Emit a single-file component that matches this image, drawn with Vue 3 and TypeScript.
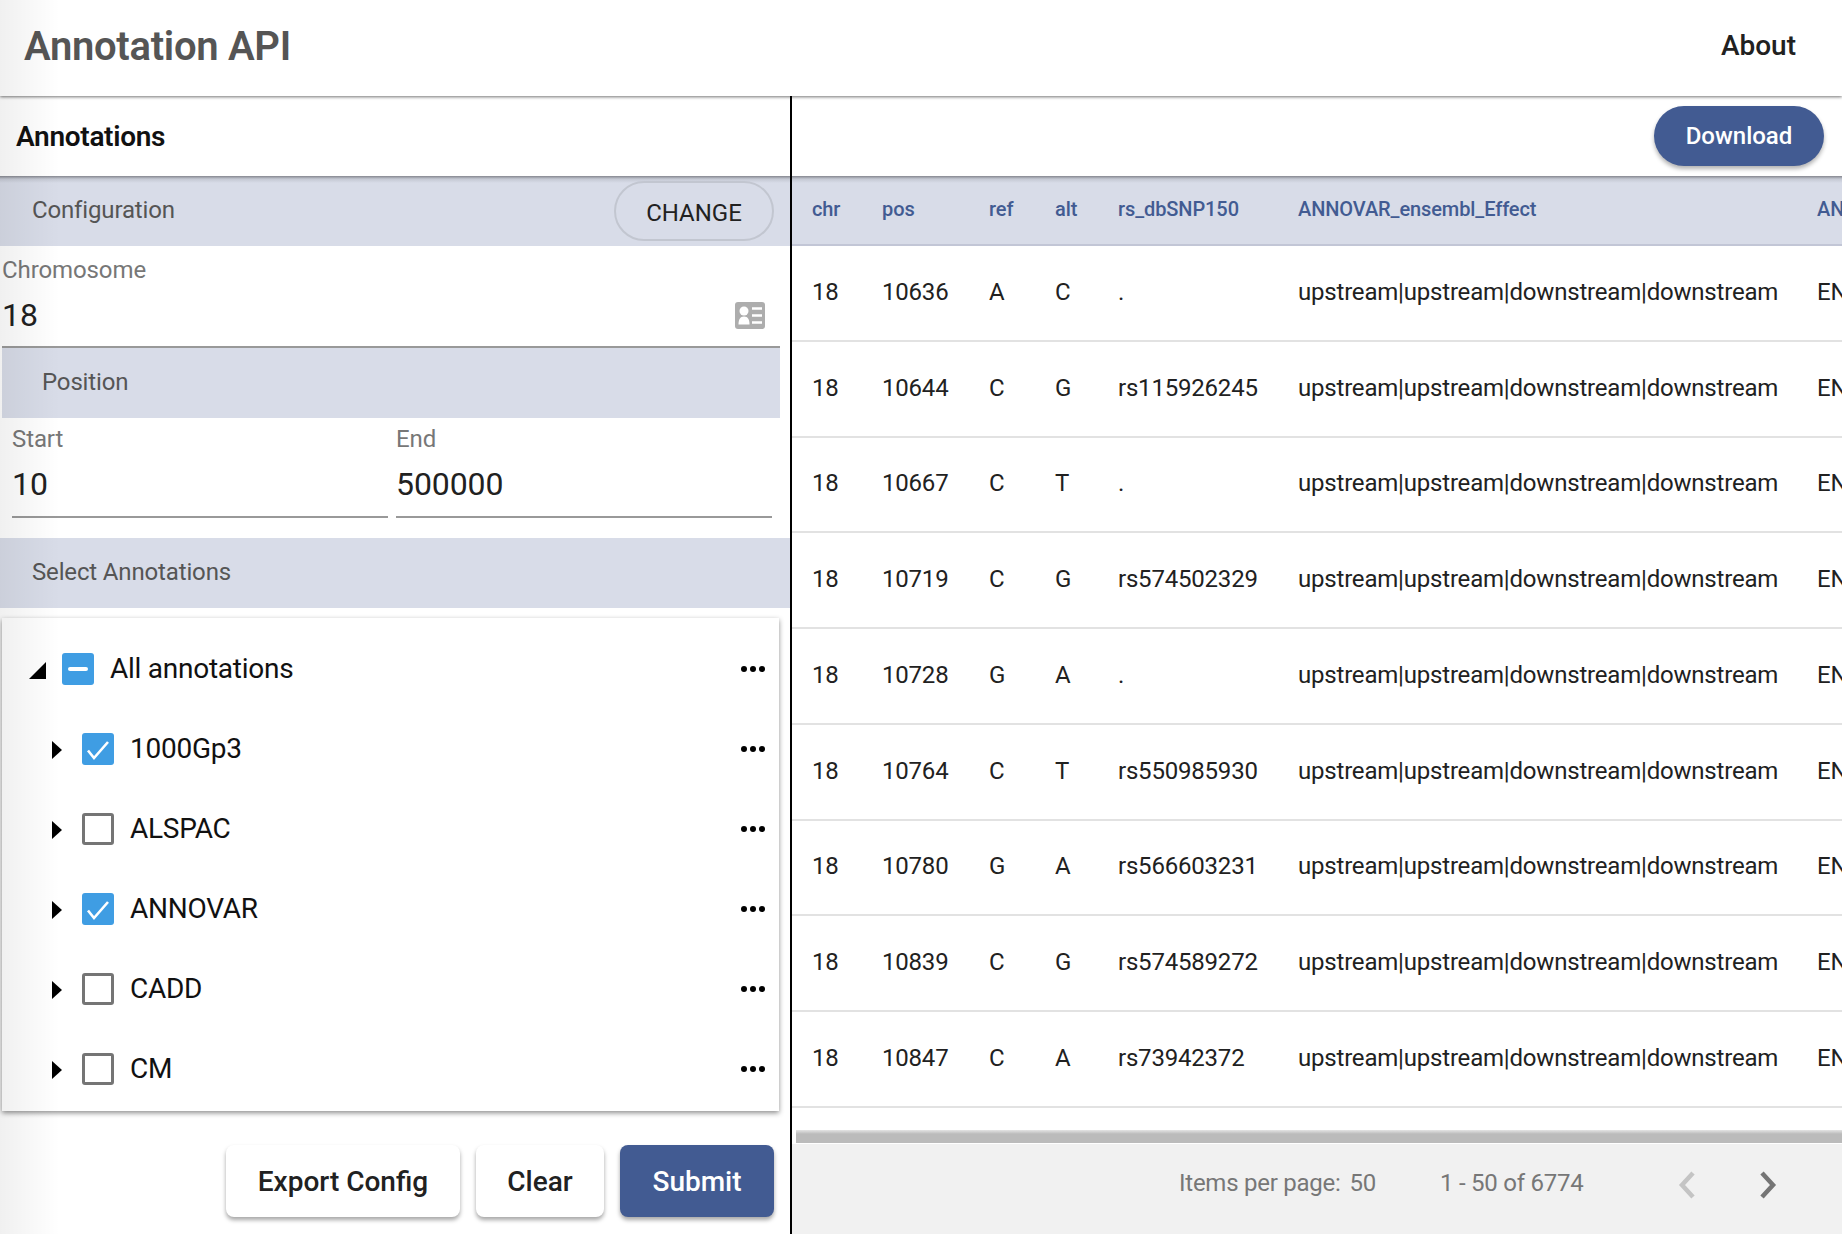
<template>
  <div class="page">
    <header class="topbar">
      <span class="brand">Annotation API</span>
      <span class="about">About</span>
    </header>

    <main class="main">
      <section class="left">
        <div class="panel-title">Annotations</div>
        <div class="band band-config">
          <span>Configuration</span>
          <button class="change-btn">CHANGE</button>
        </div>

        <div class="chromosome">
          <label class="field-label">Chromosome</label>
          <div class="chromosome-row">
            <span class="field-value">18</span>
            <svg class="card-icon" width="30" height="27" viewBox="0 0 30 27">
              <rect width="30" height="27" rx="3" fill="#adadad" />
              <circle cx="9" cy="9" r="4.500" fill="#fff" />
              <path d="M3.500 22.500c0-5 1.500-8 5.500-8s5.500 3 5.500 8z" fill="#fff" />
              <path d="M17 6.500h10M17 13.500h10M17 20.500h10" stroke="#fff" stroke-width="2.400" />
            </svg>
          </div>
        </div>

        <div class="band band-position">Position</div>
        <div class="range">
          <div class="range-field">
            <label class="field-label">Start</label>
            <span class="field-value">10</span>
          </div>
          <div class="range-field">
            <label class="field-label">End</label>
            <span class="field-value">500000</span>
          </div>
        </div>

        <div class="band band-select">Select Annotations</div>
        <div class="tree-wrap">
          <div class="tree">
            <div
              v-for="node in nodes"
              :key="node.label"
              class="tree-row"
              :class="{ child: !node.root }"
            >
              <svg v-if="node.root" class="arrow-open" width="17" height="17" viewBox="0 0 17 17">
                <path d="M17 0v17H0z" fill="#000" />
              </svg>
              <svg v-else class="arrow-closed" width="10" height="18" viewBox="0 0 10 18">
                <path d="M0 0l10 9-10 9z" fill="#000" />
              </svg>
              <span class="check" :class="node.state">
                <svg v-if="node.state === 'checked'" width="32" height="32" viewBox="0 0 32 32">
                  <path d="M6 17.500l6 7.500L26 9" fill="none" stroke="#fff" stroke-width="2.600" />
                </svg>
                <i v-if="node.state === 'mixed'" class="dash"></i>
              </span>
              <span class="tree-label">{{ node.label }}</span>
              <span class="dots"><i></i><i></i><i></i></span>
            </div>
          </div>
        </div>

        <div class="actions">
          <button class="action-btn export">Export Config</button>
          <button class="action-btn clear">Clear</button>
          <button class="action-btn primary">Submit</button>
        </div>
      </section>

      <section class="right">
        <div class="right-top">
          <button class="download-btn">Download</button>
        </div>
        <div class="table-wrap">
          <table class="grid">
            <colgroup>
              <col class="c-chr" />
              <col class="c-pos" />
              <col class="c-ref" />
              <col class="c-alt" />
              <col class="c-rs" />
              <col class="c-effect" />
              <col class="c-gene" />
            </colgroup>
            <thead>
              <tr>
                <th v-for="col in columns" :key="col">{{ col }}</th>
              </tr>
            </thead>
            <tbody>
              <tr v-for="row in rows" :key="row.pos">
                <td>18</td>
                <td>{{ row.pos }}</td>
                <td>{{ row.ref }}</td>
                <td>{{ row.alt }}</td>
                <td>{{ row.rs }}</td>
                <td>upstream|upstream|downstream|downstream</td>
                <td>ENSG00000</td>
              </tr>
            </tbody>
          </table>
        </div>
        <div class="scroll-track"></div>
        <div class="pager">
          <span class="per-page">Items per page:</span>
          <span class="per-value">50</span>
          <span class="count">1 - 50 of 6774</span>
          <svg class="chev" width="18" height="28" viewBox="0 0 18 28">
            <path d="M15 2L4 14l11 12" fill="none" stroke="#c4c4c4" stroke-width="4.500" />
          </svg>
          <svg class="chev next" width="18" height="28" viewBox="0 0 18 28">
            <path d="M3 2l11 12L3 26" fill="none" stroke="#757575" stroke-width="4.500" />
          </svg>
        </div>
      </section>
    </main>
    <div class="edge-fade"></div>
  </div>
</template>

<script setup lang="ts">
type CheckState = "checked" | "empty" | "mixed"

interface TreeNode {
  label: string
  state: CheckState
  root?: boolean
}

const nodes: TreeNode[] = [
  { label: "All annotations", state: "mixed", root: true },
  { label: "1000Gp3", state: "checked" },
  { label: "ALSPAC", state: "empty" },
  { label: "ANNOVAR", state: "checked" },
  { label: "CADD", state: "empty" },
  { label: "CM", state: "empty" },
]

const columns = ["chr", "pos", "ref", "alt", "rs_dbSNP150", "ANNOVAR_ensembl_Effect", "ANNOVAR_ensembl_Gene"]

const rows = [
  { pos: 10636, ref: "A", alt: "C", rs: "." },
  { pos: 10644, ref: "C", alt: "G", rs: "rs115926245" },
  { pos: 10667, ref: "C", alt: "T", rs: "." },
  { pos: 10719, ref: "C", alt: "G", rs: "rs574502329" },
  { pos: 10728, ref: "G", alt: "A", rs: "." },
  { pos: 10764, ref: "C", alt: "T", rs: "rs550985930" },
  { pos: 10780, ref: "G", alt: "A", rs: "rs566603231" },
  { pos: 10839, ref: "C", alt: "G", rs: "rs574589272" },
  { pos: 10847, ref: "C", alt: "A", rs: "rs73942372" },
]
</script>

<style>
html,
body {
  margin: 0;
  overflow: hidden;
}
</style>

<style scoped>
.page {
  position: relative;
  width: 1842px;
  height: 1234px;
  overflow: hidden;
  background: #fff;
  font-family: Roboto, "Liberation Sans", sans-serif;
  color: #212121;
}

.topbar {
  height: 96px;
  box-sizing: border-box;
  display: flex;
  align-items: center;
  justify-content: space-between;
  padding: 0 46px 4px 24px;
  box-shadow: 0 1px 3px rgba(0, 0, 0, 0.55);
  position: relative;
  z-index: 2;
}

.brand {
  font-size: 40px;
  font-weight: 600;
  color: #555;
  letter-spacing: -0.3px;
}

.about {
  font-size: 28px;
  font-weight: 500;
  margin-top: -1px;
}

.main {
  display: flex;
  height: 1138px;
}

.left {
  width: 790px;
  flex: none;
  display: flex;
  flex-direction: column;
}

.panel-title {
  height: 80px;
  box-sizing: border-box;
  padding: 0 0 0 16px;
  display: flex;
  align-items: center;
  font-size: 28px;
  font-weight: 600;
  color: #111;
  letter-spacing: -0.3px;
}

.band {
  background: #d8dce8;
  color: #555;
  font-size: 24px;
  letter-spacing: -0.15px;
  display: flex;
  align-items: center;
  height: 70px;
  box-sizing: border-box;
  padding-bottom: 2px;
}

.band-config {
  justify-content: space-between;
  padding: 0 16px 2px 32px;
  background: linear-gradient(#85878f, #c4c8d3 3px, #d8dce8 7px);
}

.change-btn {
  width: 160px;
  height: 60px;
  margin-top: 2px;
  border: 2px solid #c2c6d0;
  border-radius: 30px;
  background: transparent;
  font-family: inherit;
  font-size: 24px;
  color: #212121;
  padding: 3px 0 0;
}

.chromosome {
  height: 102px;
  box-sizing: border-box;
  margin: 0 10px 0 2px;
  padding-top: 10px;
  border-bottom: 2px solid #999;
}

.field-label {
  display: block;
  font-size: 24px;
  line-height: 28px;
  letter-spacing: -0.1px;
  color: #777;
}

.chromosome-row {
  display: flex;
  align-items: center;
  justify-content: space-between;
  padding-right: 15px;
  margin-top: 9px;
}

.field-value {
  display: block;
  font-size: 32px;
  line-height: 44px;
  color: #212121;
}

.band-position {
  margin: 0 10px 0 2px;
  padding-left: 40px;
}

.range {
  display: flex;
  gap: 8px;
  padding: 7px 18px 0 12px;
  height: 120px;
  box-sizing: border-box;
}

.range-field {
  flex: 1;
  height: 91px;
  border-bottom: 2px solid #999;
}

.range-field .field-value {
  margin-top: 9px;
  letter-spacing: -0.1px;
}

.band-select {
  padding-left: 32px;
}

.tree-wrap {
  padding: 10px 11px 0 2px;
}

.tree {
  height: 493px;
  box-sizing: border-box;
  padding: 11px 0 0;
  background: #fff;
  box-shadow: 0 2px 5px rgba(0, 0, 0, 0.45);
}

.tree-row {
  height: 80px;
  display: flex;
  align-items: center;
  padding: 0 14px 0 27px;
}

.tree-row.child {
  padding-left: 48px;
}

.arrow-open {
  margin: 2px 16px 0 0;
}

.arrow-closed {
  margin: 2px 20px 0 2px;
}

.check {
  width: 32px;
  height: 32px;
  flex: none;
  box-sizing: border-box;
  border-radius: 3px;
  display: flex;
  align-items: center;
  justify-content: center;
}

.check.checked,
.check.mixed {
  background: #3f9de3;
}

.check.empty {
  border: 3px solid #757575;
}

.dash {
  width: 20px;
  height: 4px;
  border-radius: 2px;
  background: #fff;
}

.tree-label {
  margin-left: 16px;
  margin-top: -2px;
  font-size: 28px;
  letter-spacing: -0.25px;
  color: #111;
  flex: 1;
}

.dots {
  display: flex;
  gap: 3px;
}

.dots i {
  width: 6px;
  height: 6px;
  border-radius: 50%;
  background: #000;
}

.actions {
  flex: 1;
  display: flex;
  justify-content: flex-end;
  gap: 16px;
  padding: 34px 16px 0 0;
}

.action-btn {
  height: 72px;
  padding: 0;
  border: none;
  border-radius: 8px;
  background: #fff;
  box-shadow: 0 3px 4px rgba(0, 0, 0, 0.35);
  font-family: inherit;
  font-size: 28px;
  font-weight: 500;
  color: #212121;
}

.action-btn.export {
  width: 234px;
}

.action-btn.clear {
  width: 128px;
}

.action-btn.primary {
  width: 154px;
  background: #425b92;
  color: #fff;
}

.right {
  flex: 1;
  min-width: 0;
  border-left: 2px solid #000;
  display: flex;
  flex-direction: column;
}

.right-top {
  height: 80px;
  box-sizing: border-box;
  display: flex;
  justify-content: flex-end;
  align-items: flex-start;
  padding: 10px 18px 0 0;
}

.download-btn {
  width: 170px;
  height: 60px;
  border: none;
  border-radius: 30px;
  background: #425b92;
  color: #fff;
  font-family: inherit;
  font-size: 24px;
  font-weight: 500;
  box-shadow: 0 3px 4px rgba(0, 0, 0, 0.3);
}

.table-wrap {
  flex: 1;
  overflow: hidden;
}

.grid {
  table-layout: fixed;
  width: 1305px;
  border-collapse: separate;
  border-spacing: 0;
}

.c-chr {
  width: 70px;
}

.c-pos {
  width: 107px;
}

.c-ref {
  width: 66px;
}

.c-alt {
  width: 63px;
}

.c-rs {
  width: 180px;
}

.c-effect {
  width: 519px;
}

.c-gene {
  width: 300px;
}

.grid th {
  height: 70px;
  padding: 0 0 2px 20px;
  box-sizing: border-box;
  background: linear-gradient(#85878f, #c4c8d3 3px, #d8dce8 7px);
  border-bottom: 2px solid #c2c6d6;
  color: #425b92;
  font-size: 20px;
  font-weight: 500;
  letter-spacing: -0.1px;
  text-align: left;
  white-space: nowrap;
  overflow: hidden;
}

.grid td {
  height: 95.78px;
  padding: 0 0 2px 20px;
  box-sizing: border-box;
  border-bottom: 2px solid #e2e2e2;
  font-size: 24px;
  letter-spacing: -0.2px;
  color: #212121;
  white-space: nowrap;
  overflow: hidden;
}

.scroll-track {
  height: 13px;
  margin: 0 0 1px 4px;
  background: linear-gradient(#e4e4e4, #bbb 4px);
}

.pager {
  height: 90px;
  box-sizing: border-box;
  background: #f1f1f1;
  display: flex;
  align-items: center;
  padding: 0 0 12px 387px;
  font-size: 24px;
  letter-spacing: -0.25px;
  color: #777;
}

.per-value {
  margin-left: 9px;
}

.count {
  margin-left: 64px;
}

.chev {
  margin-left: 95px;
  margin-top: 4px;
}

.chev.next {
  margin-left: 63px;
}

.edge-fade {
  position: absolute;
  inset: 0 auto 0 0;
  width: 60px;
  background: linear-gradient(90deg, rgba(0, 0, 0, 0.06), rgba(0, 0, 0, 0));
  pointer-events: none;
  z-index: 3;
}
</style>
